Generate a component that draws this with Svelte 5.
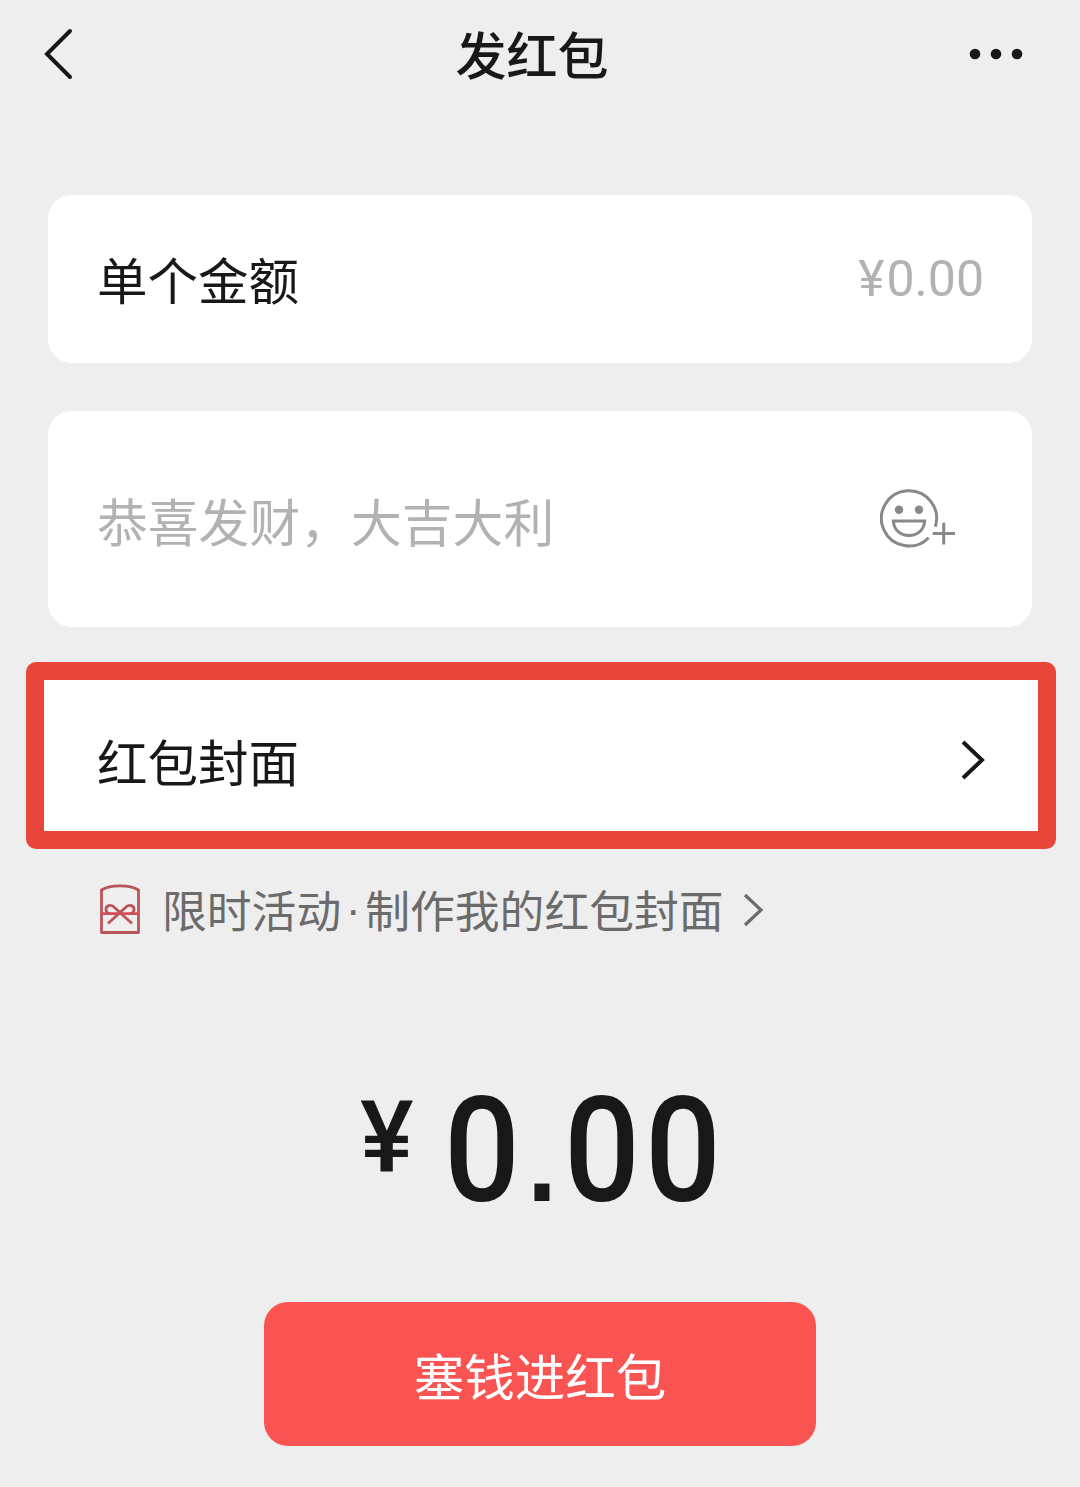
<script>
    let amount = 0;
    let coverName = '红包封面';

    $: money = amount.toFixed(2);
    $: [yuan, cents] = money.split('.');
</script>

<main>
    <header>
        <svg class="back" viewBox="0 0 34 54" aria-label="返回">
            <path d="M30 4 L7 27 L30 50" />
        </svg>
        <h1>发红包</h1>
        <svg class="more" viewBox="0 0 56 12" aria-label="更多">
            <circle cx="7" cy="6" r="5.3" />
            <circle cx="28" cy="6" r="5.3" />
            <circle cx="49" cy="6" r="5.3" />
        </svg>
    </header>

    <section class="card amount">
        <span class="label">单个金额</span>
        <span class="value"><span class="sign">¥</span>{money}</span>
    </section>

    <section class="card wish">
        <span class="placeholder">恭喜发财，大吉大利</span>
        <svg class="emoji" viewBox="0 0 80 64" aria-label="表情">
            <path d="M55.3 39.7 A27.6 27.6 0 1 0 48.7 50.7" />
            <path d="M13.3 34 H44.7 C43.5 53.3 14.5 53.3 13.3 34 Z" />
            <circle cx="19" cy="22.7" r="4.2" />
            <circle cx="39" cy="22.7" r="4.2" />
            <path d="M52.7 46.5 H75 M63.7 35.7 V57.5" />
        </svg>
    </section>

    <section class="cover">
        <span class="label">{coverName}</span>
        <svg class="arrow" viewBox="0 0 26 42">
            <path d="M3 3 L22 21 L3 39" />
        </svg>
    </section>

    <div class="activity">
        <svg class="packet" viewBox="0 0 44 54">
            <path d="M3.5 8 C12 2.4 32 2.4 40.5 8 V50.5 H3.5 Z" />
            <path class="ribbon" d="M3.5 31.7 H40.5" />
            <path d="M34 41.5 L17 26 C13 21.5 7.5 23.5 8 28 C8.5 30.5 10 31.7 12 31.7 M10 41.5 L27 26 C31 21.5 36.5 23.5 36 28 C35.5 30.5 34 31.7 32 31.7" />
        </svg>
        <span>限时活动</span>
        <span class="dot">·</span>
        <span>制作我的红包封面</span>
        <svg class="arrow-small" viewBox="0 0 22 36">
            <path d="M3 3 L19 18 L3 33" />
        </svg>
    </div>

    <div class="total">
        <span class="yen">¥</span>
        <span class="sum">{yuan}<span class="point">.</span>{cents}</span>
    </div>

    <button>塞钱进红包</button>
</main>

<style>
    :global(body) {
        background-color: #eee;
    }
    main {
        box-sizing: border-box;
        display: flex;
        flex-direction: column;
        width: 1080px;
        height: 1487px;
        overflow: hidden;
        background-color: #eee;
        color: #181818;
        font-family: "Noto Sans CJK SC", sans-serif;
        font-size: 50.5px;
        line-height: 1;
    }
    svg {
        display: block;
        flex: none;
        fill: none;
        stroke: #181818;
    }
    header {
        display: flex;
        justify-content: space-between;
        align-items: center;
        height: 108px;
        margin-bottom: 87px;
        padding: 0 56px 0 40px;
    }
    h1 {
        margin: 0 0 0 22px;
        padding-bottom: 2px;
        font-size: 51px;
        font-weight: 500;
    }
    .back {
        width: 34px;
        height: 54px;
        stroke-width: 4;
        stroke-linecap: round;
    }
    .more {
        width: 56px;
        height: 12px;
        fill: #181818;
        stroke: none;
    }
    .card {
        box-sizing: border-box;
        display: flex;
        justify-content: space-between;
        align-items: center;
        margin: 0 48px 48px;
        padding: 0 48px 0 49px;
        border-radius: 24px;
        background-color: #fff;
    }
    .amount {
        height: 168px;
    }
    .amount .label {
        padding-bottom: 1px;
    }
    .value {
        color: #b2b2b2;
        font-family: Roboto, sans-serif;
        font-size: 50px;
    }
    .sign {
        margin-right: 2px;
    }
    .wish {
        height: 216px;
        margin-bottom: 35px;
        padding-right: 72px;
    }
    .placeholder {
        padding-top: 2px;
        color: #b2b2b2;
        font-size: 50.8px;
    }
    .emoji {
        width: 80px;
        height: 64px;
        stroke: #888;
        stroke-width: 3;
    }
    .emoji circle {
        fill: #888;
        stroke: none;
    }
    .cover {
        box-sizing: border-box;
        display: flex;
        justify-content: space-between;
        align-items: center;
        height: 187px;
        margin: 0 24px 0 26px;
        padding: 9px 52px 0 53px;
        border: 18px solid #e8463a;
        border-radius: 10px;
        background-color: #fff;
    }
    .arrow {
        width: 26px;
        height: 42px;
        stroke-width: 4;
    }
    .activity {
        display: flex;
        align-items: center;
        height: 60px;
        margin-top: 30px;
        padding-left: 98px;
        color: #6b6b6b;
        font-size: 44.8px;
    }
    .packet {
        width: 44px;
        height: 54px;
        margin-right: 20px;
        stroke: #b8565a;
        stroke-width: 2.8;
        stroke-linejoin: round;
    }
    .ribbon {
        stroke: #dc4a55;
    }
    .dot {
        width: 24px;
        font-family: "Liberation Sans", sans-serif;
        text-align: center;
    }
    .arrow-small {
        width: 22px;
        height: 36px;
        margin: 2px 0 0 18px;
        stroke: #6b6b6b;
        stroke-width: 3.2;
    }
    .total {
        display: flex;
        align-items: flex-start;
        height: 146px;
        margin-top: 140px;
        padding-left: 360px;
        font-family: Roboto, sans-serif;
        font-weight: 500;
    }
    .yen {
        margin: 8px 30px 0 0;
        font-size: 101px;
    }
    .sum {
        font-size: 146px;
        letter-spacing: 5.6px;
        transform: scaleX(0.915);
        transform-origin: left;
    }
    .point {
        margin: 0 2.4px;
        font-family: "Liberation Sans", sans-serif;
        font-size: 116px;
        font-weight: 700;
        line-height: 0;
    }
    button {
        align-self: center;
        width: 552px;
        height: 144px;
        margin-top: 77px;
        padding: 0;
        border: none;
        border-radius: 24px;
        background-color: #fa5452;
        color: #fff;
        font: inherit;
    }
</style>
